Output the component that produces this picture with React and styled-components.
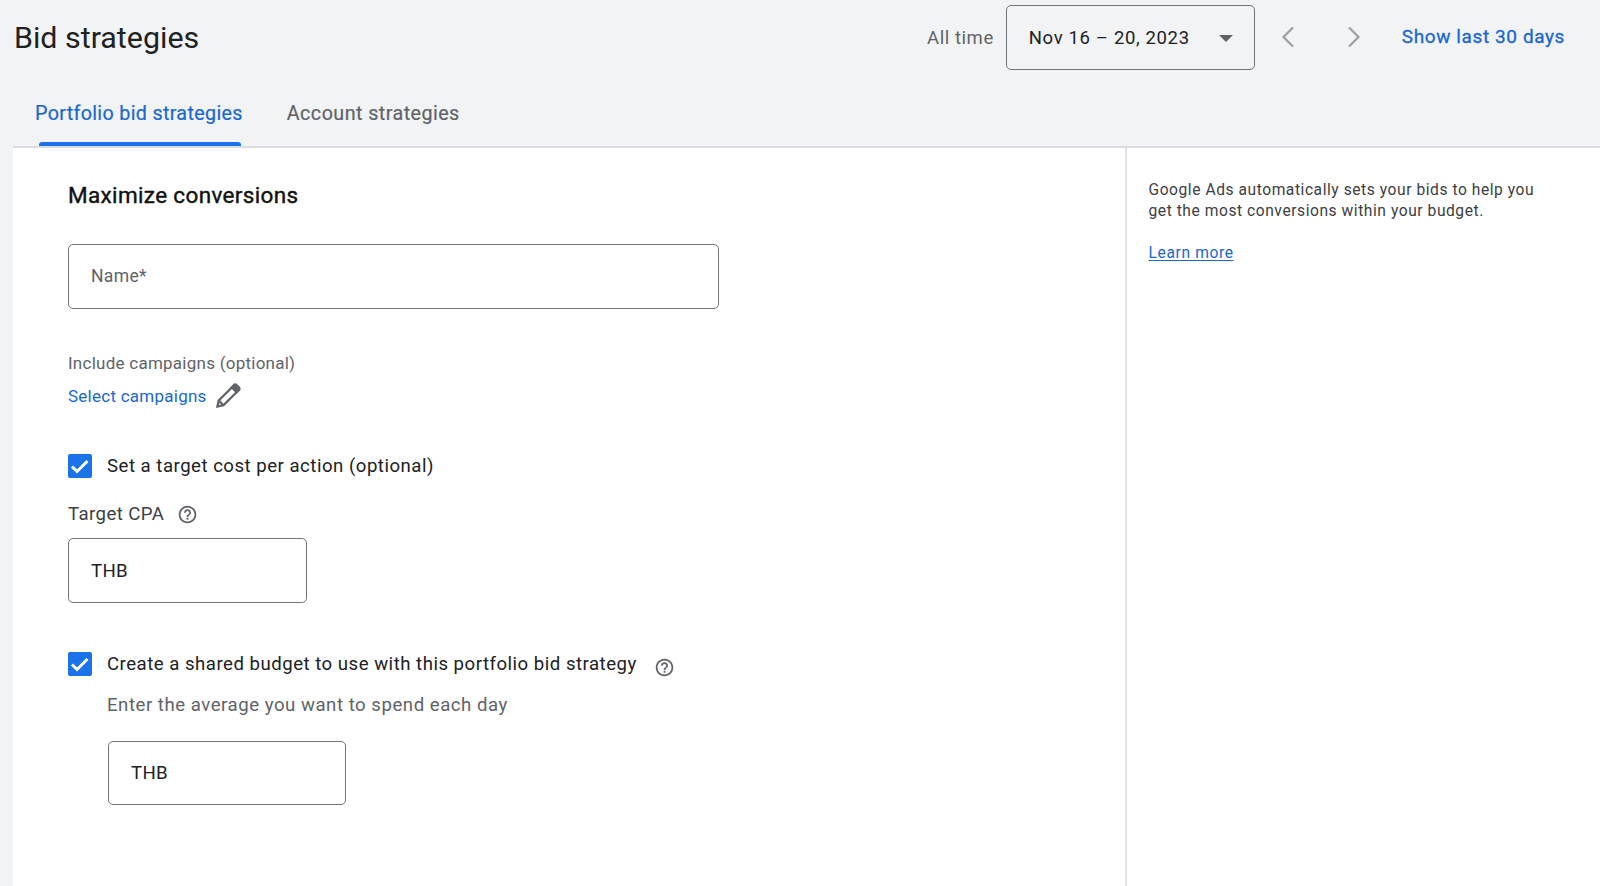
import React from "react";
import styled, { createGlobalStyle } from "styled-components";

const Global = createGlobalStyle`
  html, body { margin: 0; height: 100%; background: #f1f3f4; }
  body { font-family: Roboto, "Liberation Sans", sans-serif; overflow: hidden; -webkit-font-smoothing: antialiased; }
  * { box-sizing: border-box; }
`;

const Page = styled.div`
  width: 1600px;
  height: 886px;
  display: flex;
  flex-direction: column;
  background: #f1f3f4;
`;
const TopBar = styled.header`
  height: 75px;
  display: flex;
  align-items: flex-start;
  padding: 5px 35px 0 14px;
`;
const Title = styled.h1`
  margin: 14px 0 0;
  font-size: 30.4px;
  line-height: 38px;
  font-weight: 400;
  color: #202124;
  flex: 1;
`;
const AllTime = styled.span`
  margin: 21px 12px 0 0;
  font-size: 18.5px;
  line-height: 24px;
  color: #5f6368;
  letter-spacing: 0.55px;
`;
const DateSelect = styled.div`
  width: 249px;
  height: 65px;
  border: 1.5px solid #70757a;
  border-radius: 5px;
  display: flex;
  align-items: center;
  justify-content: space-between;
  padding: 0 21px 0 22px;
  font-size: 18.5px;
  letter-spacing: 0.65px;
  color: #202124;
`;
const Caret = styled.span`
  width: 0;
  height: 0;
  border-left: 7px solid transparent;
  border-right: 7px solid transparent;
  border-top: 7px solid #5f6368;
  margin-top: 2px;
`;
const NavIcon = styled.svg`
  width: 14px;
  height: 22px;
  margin-top: 21px;
  margin-left: ${(p) => p.$gap}px;
  fill: none;
  stroke: #9aa0a6;
  stroke-width: 2.2;
`;
const LastDays = styled.a`
  margin: 20px 0 0 41px;
  font-size: 19px;
  line-height: 24px;
  font-weight: 400;
  letter-spacing: 0.6px;
  color: #1967d2;
  -webkit-text-stroke: 0.3px currentColor;
`;
const Tabs = styled.nav`
  height: 73px;
  margin-left: 13px;
  display: flex;
  align-items: flex-start;
  padding-left: 22px;
  gap: 44px;
  border-bottom: 2px solid #dadce0;
`;
const Tab = styled.div`
  position: relative;
  height: 71px;
  padding-top: 27px;
  font-size: 19.7px;
  line-height: 24px;
  font-weight: 400;
  letter-spacing: ${(p) => (p.$active ? 0.34 : 0.46)}px;
  color: ${(p) => (p.$active ? "#1967d2" : "#5f6368")};
  -webkit-text-stroke: 0.2px currentColor;
`;
const TabBar = styled.span`
  position: absolute;
  left: 4px;
  right: 2px;
  bottom: 0;
  height: 4px;
  background: #1a73e8;
  border-radius: 3px 3px 0 0;
`;
const Panel = styled.main`
  flex: 1;
  margin-left: 13px;
  background: #fff;
  display: grid;
  grid-template-columns: 1112px 1fr;
  min-height: 0;
`;
const Form = styled.section`
  padding: 32px 0 0 55px;
  display: flex;
  flex-direction: column;
  align-items: flex-start;
`;
const Side = styled.aside`
  border-left: 2px solid #e3e5e8;
  padding: 32px 60px 0 21.5px;
  font-size: 15.6px;
  line-height: 21px;
  letter-spacing: 0.55px;
  color: #3c4043;
`;
const SideText = styled.p`
  margin: 0;
`;
const LearnMore = styled.a`
  display: inline-block;
  margin-top: 21px;
  color: #1967d2;
  letter-spacing: 0.62px;
  text-decoration: underline;
  text-underline-offset: 2px;
`;
const Heading = styled.h2`
  margin: 0;
  font-size: 22.5px;
  line-height: 30px;
  font-weight: 400;
  color: #111;
  letter-spacing: 0.35px;
  -webkit-text-stroke: 0.4px currentColor;
`;
const Field = styled.div`
  width: ${(p) => p.$w}px;
  height: ${(p) => p.$h || 65}px;
  margin-top: ${(p) => p.$top || 0}px;
  margin-left: ${(p) => p.$left || 0}px;
  border: 1.5px solid #70757a;
  border-radius: 5px;
  display: flex;
  align-items: center;
  padding-left: 22px;
  padding-bottom: ${(p) => (p.$muted ? 2 : 0)}px;
  font-size: ${(p) => (p.$muted ? 17.6 : 18.7)}px;
  color: ${(p) => (p.$muted ? "#5f6368" : "#202124")};
  letter-spacing: 0.3px;
`;
const Muted = styled.div`
  margin-top: 43px;
  font-size: 17px;
  line-height: 22px;
  letter-spacing: 0.25px;
  color: #5f6368;
`;
const SelectRow = styled.div`
  margin-top: 10px;
  display: flex;
  align-items: center;
  gap: 7px;
  height: 24px;
  color: #1967d2;
  font-size: 17px;
  letter-spacing: 0.25px;
`;
const CheckRow = styled.label`
  display: flex;
  align-items: center;
  height: 24px;
  margin-top: ${(p) => p.$top}px;
  font-size: 18.6px;
  letter-spacing: 0.5px;
  color: #202124;
`;
const Check = styled.span`
  width: 24px;
  height: 24px;
  border-radius: 2px;
  background: #1a73e8;
  margin-right: 15px;
  display: flex;
  align-items: center;
  justify-content: center;
`;
const LabelRow = styled.div`
  display: flex;
  align-items: center;
  gap: 13px;
  height: 24px;
  margin-top: 24px;
  font-size: 18.6px;
  letter-spacing: 0.43px;
  color: #3c4043;
`;
const Hint = styled.div`
  margin: 17px 0 0 39px;
  height: 24px;
  line-height: 24px;
  font-size: 18.6px;
  letter-spacing: 0.53px;
  color: #5f6368;
`;
const HelpWrap = styled.span`
  display: inline-flex;
  margin-left: ${(p) => p.$left || 0}px;
  margin-top: ${(p) => p.$top || 0}px;
`;

const Help = () => (
  <svg width="21" height="21" viewBox="0 0 24 24" fill="#5f6368">
    <path d="M12 2C6.48 2 2 6.48 2 12s4.48 10 10 10 10-4.48 10-10S17.52 2 12 2zm0 18c-4.41 0-8-3.59-8-8s3.59-8 8-8 8 3.59 8 8-3.59 8-8 8zm-1-4h2v2h-2zm1-10c-2.21 0-4 1.79-4 4h2c0-1.1.9-2 2-2s2 .9 2 2c0 2-3 1.75-3 5h2c0-2.25 3-2.5 3-5 0-2.21-1.79-4-4-4z" />
  </svg>
);
const Tick = () => (
  <svg width="24" height="24" viewBox="0 0 24 24" fill="none" stroke="#fff" strokeWidth="3">
    <path d="M4 12.5l5 5L19.5 7" />
  </svg>
);
const Pencil = () => (
  <svg width="28" height="28" viewBox="0 0 26 26" fill="none" stroke="#5f6368" strokeWidth="2.2">
    <path d="M3.2 22.8l1.2-5.6L18.6 3a1.7 1.7 0 0 1 2.4 0l2 2a1.7 1.7 0 0 1 0 2.4L8.8 21.6z" />
    <path d="M4.4 17.2l4.4 4.4" />
    <path d="M18.6 3l4.4 4.4L21 9.4l-4.4-4.4z" fill="#5f6368" />
  </svg>
);

export default function App() {
  return (
    <Page>
      <Global />
      <TopBar>
        <Title>Bid strategies</Title>
        <AllTime>All time</AllTime>
        <DateSelect>
          <span>Nov 16 – 20, 2023</span>
          <Caret />
        </DateSelect>
        <NavIcon $gap={26} viewBox="0 0 14 22"><path d="M12 1.5L2.5 11l9.5 9.5" /></NavIcon>
        <NavIcon $gap={52} viewBox="0 0 14 22"><path d="M2 1.5L11.5 11 2 20.5" /></NavIcon>
        <LastDays>Show last 30 days</LastDays>
      </TopBar>
      <Tabs>
        <Tab $active>Portfolio bid strategies<TabBar /></Tab>
        <Tab>Account strategies</Tab>
      </Tabs>
      <Panel>
        <Form>
          <Heading>Maximize conversions</Heading>
          <Field $w={651} $top={34} $muted>Name*</Field>
          <Muted>Include campaigns (optional)</Muted>
          <SelectRow>Select campaigns <Pencil /></SelectRow>
          <CheckRow $top={46}><Check><Tick /></Check>Set a target cost per action (optional)</CheckRow>
          <LabelRow>Target CPA <Help /></LabelRow>
          <Field $w={239} $top={12}>THB</Field>
          <CheckRow $top={49}>
            <Check><Tick /></Check>Create a shared budget to use with this portfolio bid strategy
            <HelpWrap $left={17} $top={6}><Help /></HelpWrap>
          </CheckRow>
          <Hint>Enter the average you want to spend each day</Hint>
          <Field $w={238} $h={64} $top={24} $left={40}>THB</Field>
        </Form>
        <Side>
          <SideText>Google Ads automatically sets your bids to help you get the most conversions within your budget.</SideText>
          <LearnMore>Learn more</LearnMore>
        </Side>
      </Panel>
    </Page>
  );
}
